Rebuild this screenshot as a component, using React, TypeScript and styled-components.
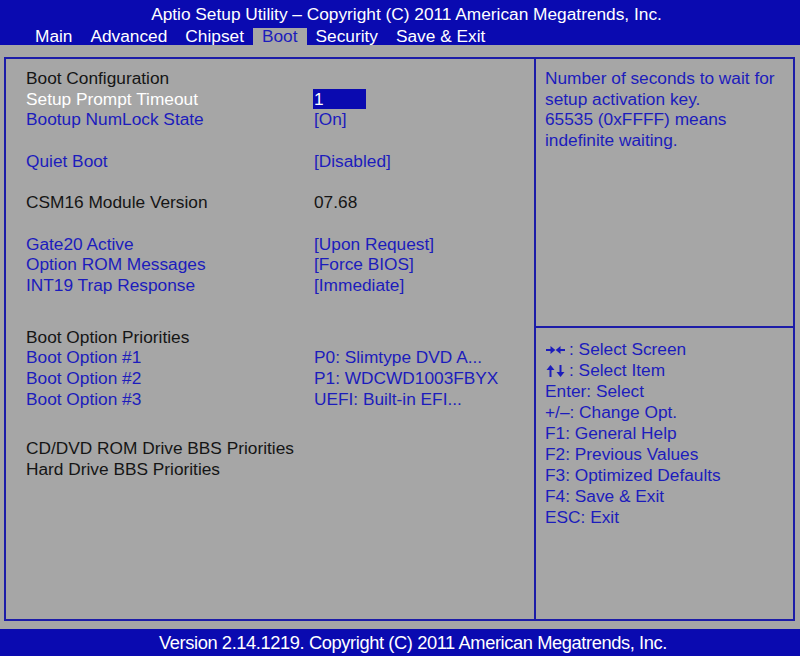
import React from "react";
import styled, { createGlobalStyle } from "styled-components";

const Global = createGlobalStyle`
  html, body { margin: 0; padding: 0; background: #a6a6a6; }
  body { font-family: "Liberation Sans", Arial, sans-serif; }
`;

const BLUE = "#0a0ab0";
const TEXT_BLUE = "#1c1cbc";
const LINE = "#1c1ca8";

const Screen = styled.div`
  width: 800px;
  height: 656px;
  background: #a6a6a6;
  display: flex;
  flex-direction: column;
  font-size: 17.3px;
  overflow: hidden;
`;

const Header = styled.header`
  height: 45px;
  background: ${BLUE};
  color: #fff;
  padding-top: 1px;
  box-sizing: border-box;
  display: flex;
  flex-direction: column;
`;

const Title = styled.div`
  height: 26px;
  line-height: 26px;
  text-align: center;
  padding-left: 13px;
  white-space: nowrap;
`;

const Tabs = styled.nav`
  margin-top: 1px;
  height: 17px;
  display: flex;
  padding-left: 26px;
`;

const Tab = styled.div<{ $active?: boolean }>`
  height: 17px;
  line-height: 17px;
  padding: 0 9px;
  white-space: nowrap;
  background: ${(p) => (p.$active ? "#a6a6a6" : "transparent")};
  color: ${(p) => (p.$active ? TEXT_BLUE : "#fff")};
`;

const Frame = styled.main`
  margin: 12px 5px 0 4px;
  height: 565px;
  box-sizing: border-box;
  border: 2px solid ${LINE};
  display: grid;
  grid-template-columns: 530px 1fr;
`;

const LeftPane = styled.section`
  border-right: 2px solid ${LINE};
  padding: 9px 0 0 20px;
`;

const Row = styled.div<{ $gap?: number }>`
  display: grid;
  grid-template-columns: 287px 1fr;
  height: 20.7px;
  line-height: 20.7px;
  margin-top: ${(p) => p.$gap ?? 0}px;
  white-space: nowrap;
`;

type Tone = "black" | "blue" | "white";
const toneColor = (t: Tone) => (t === "black" ? "#151515" : t === "white" ? "#fff" : TEXT_BLUE);

const Label = styled.span<{ $tone: Tone }>`
  color: ${(p) => toneColor(p.$tone)};
`;

const Value = styled.span<{ $tone: Tone; $selected?: boolean }>`
  color: ${(p) => (p.$selected ? "#fff" : toneColor(p.$tone))};
  padding-left: 1px;
  ${(p) =>
    p.$selected
      ? `background: ${BLUE}; width: 53px; box-sizing: border-box; height: 20px; line-height: 20px; margin-top: 0.5px;`
      : ""}
`;

const RightPane = styled.aside`
  display: grid;
  grid-template-rows: 269px 1fr;
`;

const HelpBox = styled.div`
  border-bottom: 2px solid ${LINE};
  padding: 9px 0 0 9px;
  color: ${TEXT_BLUE};
  line-height: 20.7px;
`;

const KeysBox = styled.div`
  padding: 11.4px 0 0 9px;
  color: ${TEXT_BLUE};
  line-height: 21px;
`;

const KeyLine = styled.div`
  height: 21px;
  white-space: nowrap;
  display: flex;
  align-items: center;
`;

const ArrowIcon = styled.svg`
  width: 19px;
  height: 12px;
  margin: 0 4px 0 1px;
  flex: none;
`;

const Footer = styled.footer`
  margin-top: 8px;
  height: 27px;
  line-height: 27px;
  background: ${BLUE};
  color: #fff;
  text-align: center;
  padding-left: 26px;
  font-size: 18.3px;
  letter-spacing: -0.4px;
  white-space: nowrap;
`;

type Item = { label: string; value?: string; tone: Tone; gap?: number; selected?: boolean };

const items: Item[] = [
  { label: "Boot Configuration", tone: "black" },
  { label: "Setup Prompt Timeout", value: "1", tone: "white", selected: true },
  { label: "Bootup NumLock State", value: "[On]", tone: "blue" },
  { label: "Quiet Boot", value: "[Disabled]", tone: "blue", gap: 20.7 },
  { label: "CSM16 Module Version", value: "07.68", tone: "black", gap: 20.7 },
  { label: "Gate20 Active", value: "[Upon Request]", tone: "blue", gap: 20.7 },
  { label: "Option ROM Messages", value: "[Force BIOS]", tone: "blue" },
  { label: "INT19 Trap Response", value: "[Immediate]", tone: "blue" },
  { label: "Boot Option Priorities", tone: "black", gap: 31 },
  { label: "Boot Option #1", value: "P0: Slimtype DVD A...", tone: "blue" },
  { label: "Boot Option #2", value: "P1: WDCWD1003FBYX", tone: "blue" },
  { label: "Boot Option #3", value: "UEFI: Built-in EFI...", tone: "blue" },
  { label: "CD/DVD ROM Drive BBS Priorities", tone: "black", gap: 29 },
  { label: "Hard Drive BBS Priorities", tone: "black" },
];

const LeftRight = () => (
  <ArrowIcon viewBox="0 0 19 12">
    <line x1="0" y1="6" x2="6" y2="6" stroke="currentColor" strokeWidth="2" />
    <polygon points="4.5,2 9.3,6 4.5,10" fill="currentColor" />
    <line x1="13" y1="6" x2="19" y2="6" stroke="currentColor" strokeWidth="2" />
    <polygon points="14.5,2 9.7,6 14.5,10" fill="currentColor" />
  </ArrowIcon>
);

const UpDown = () => (
  <ArrowIcon viewBox="0 0 19 12">
    <line x1="4.5" y1="4" x2="4.5" y2="12" stroke="currentColor" strokeWidth="2" />
    <polygon points="0.5,5 4.5,0 8.5,5" fill="currentColor" />
    <line x1="14.5" y1="0" x2="14.5" y2="8" stroke="currentColor" strokeWidth="2" />
    <polygon points="10.5,7 14.5,12 18.5,7" fill="currentColor" />
  </ArrowIcon>
);

const keys = [
  "Enter: Select",
  "+/\u2013: Change Opt.",
  "F1: General Help",
  "F2: Previous Values",
  "F3: Optimized Defaults",
  "F4: Save & Exit",
  "ESC: Exit",
];

export default function App() {
  return (
    <>
      <Global />
      <Screen>
        <Header>
          <Title>Aptio Setup Utility – Copyright (C) 2011 American Megatrends, Inc.</Title>
          <Tabs>
            {["Main", "Advanced", "Chipset", "Boot", "Security", "Save & Exit"].map((t) => (
              <Tab key={t} $active={t === "Boot"}>
                {t}
              </Tab>
            ))}
          </Tabs>
        </Header>
        <Frame>
          <LeftPane>
            {items.map((it) => (
              <Row key={it.label} $gap={it.gap}>
                <Label $tone={it.tone}>{it.label}</Label>
                {it.value !== undefined && (
                  <Value $tone={it.tone} $selected={it.selected}>
                    {it.value}
                  </Value>
                )}
              </Row>
            ))}
          </LeftPane>
          <RightPane>
            <HelpBox>
              Number of seconds to wait for
              <br />
              setup activation key.
              <br />
              65535 (0xFFFF) means
              <br />
              indefinite waiting.
            </HelpBox>
            <KeysBox>
              <KeyLine>
                <LeftRight />: Select Screen
              </KeyLine>
              <KeyLine>
                <UpDown />: Select Item
              </KeyLine>
              {keys.map((k) => (
                <KeyLine key={k}>{k}</KeyLine>
              ))}
            </KeysBox>
          </RightPane>
        </Frame>
        <Footer>Version 2.14.1219. Copyright (C) 2011 American Megatrends, Inc.</Footer>
      </Screen>
    </>
  );
}
